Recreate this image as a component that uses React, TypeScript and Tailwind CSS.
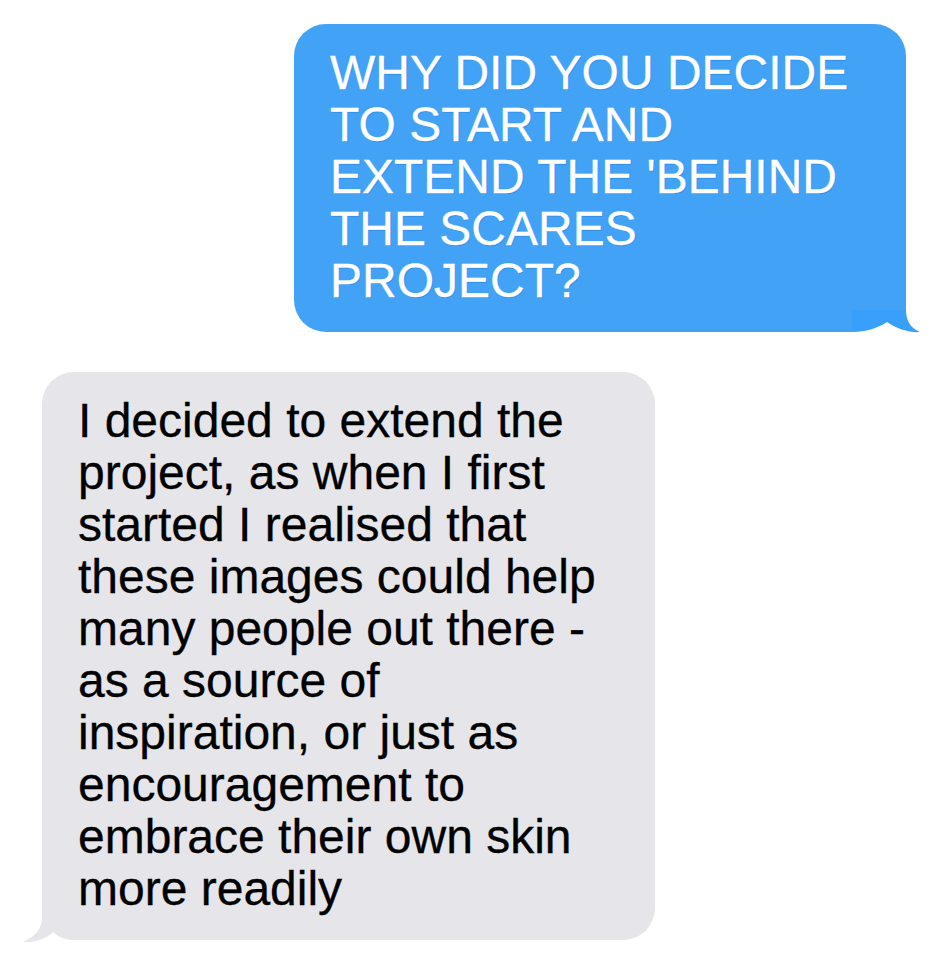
export default function App() {
  return (
    <div
      className="w-[948px] h-[956px] bg-white flex flex-col"
      style={{ fontFamily: '"Liberation Sans", Arial, sans-serif' }}
    >
      {/* outgoing */}
      <div className="relative self-end mr-[42px] mt-[24px] w-[612px] bg-[#42a2f5] rounded-[32px] rounded-br-none pl-[36px] pr-[20px] pt-[23px] pb-[25px] text-white text-[48px] leading-[52px] whitespace-nowrap [-webkit-text-stroke:0.3px_#ffffff] [text-shadow:1px_1px_0_rgba(40,130,220,0.6)]">
        WHY DID YOU DECIDE
        <br />
        TO START AND
        <br />
        EXTEND THE 'BEHIND
        <br />
        THE SCARES
        <br />
        PROJECT?
        <svg
          className="absolute right-[-18px] bottom-[-4px]"
          width="72"
          height="30"
          viewBox="0 0 72 30"
        >
          <rect x="0" y="4" width="72" height="26" fill="#ffffff" />
          <path
            d="M0,4 L54,4 C54,14 58,22 68,26 C58,27 45,23 35,16 C26,22 14,26 0,26 Z"
            fill="#38a0fa"
          />
        </svg>
      </div>

      {/* incoming */}
      <div className="relative self-start ml-[42px] mt-[40px] w-[613px] bg-[#e5e5ea] rounded-[32px] rounded-bl-none pl-[36px] pr-[20px] pt-[23px] pb-[25px] text-black text-[48px] leading-[52px] whitespace-nowrap [-webkit-text-stroke:0.3px_#000000]">
        I decided to extend the
        <br />
        project, as when I first
        <br />
        started I realised that
        <br />
        these images could help
        <br />
        many people out there -
        <br />
        as a source of
        <br />
        inspiration, or just as
        <br />
        encouragement to
        <br />
        embrace their own skin
        <br />
        more readily
        <svg
          className="absolute left-[-20px] bottom-[-4px]"
          width="52"
          height="30"
          viewBox="0 0 52 30"
        >
          <rect x="0" y="4" width="52" height="26" fill="#ffffff" />
          <path
            d="M52,4 L20,4 C20,14 14,22 1,28 C12,29 24,25 31,18 C38,24 44,26 52,26 Z"
            fill="#e5e5ea"
          />
        </svg>
      </div>
    </div>
  );
}
